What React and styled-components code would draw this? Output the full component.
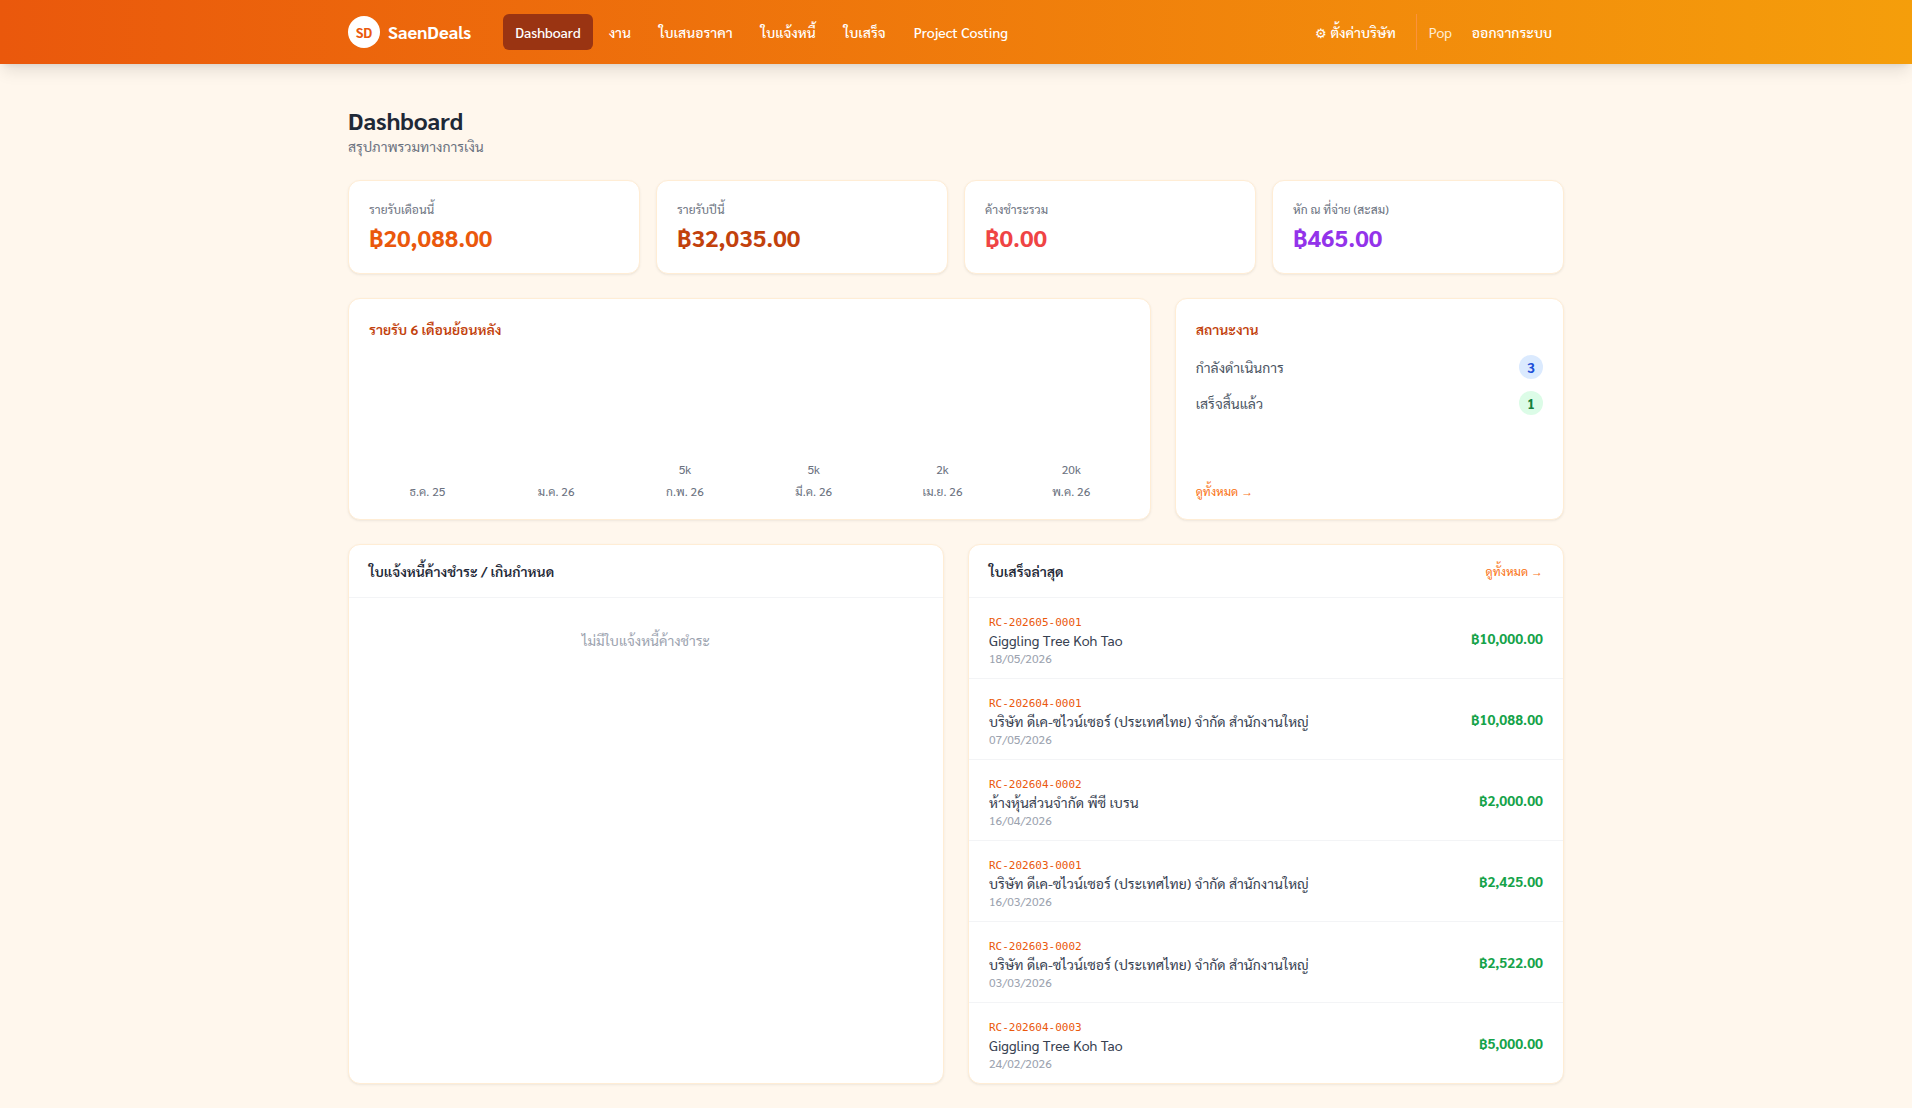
import React from "react";
import styled, { createGlobalStyle } from "styled-components";

const Global = createGlobalStyle`
  *, *::before, *::after { box-sizing: border-box; }
  body { margin: 0; background: #fff7ed; color: #1f2937; font-family: "Sarabun", "Open Sans", "Noto Sans Thai", "Noto Sans", sans-serif; font-size: 16px; line-height: 24px; }
  h1, h2, p { margin: 0; }
`;
const Bar = styled.header`
  height: 64px; background: linear-gradient(90deg, #ea580c, #f59e0b);
  box-shadow: 0 10px 15px -3px rgba(0,0,0,.1), 0 4px 6px -4px rgba(0,0,0,.1);
`;
const BarInner = styled.div`
  width: 1216px; height: 64px; margin: 0 auto; display: flex; align-items: center; justify-content: space-between; color: #fff;
`;
const Group = styled.div`display: flex; align-items: center; gap: ${(p) => p.$gap}px;`;
const Logo = styled.div`
  width: 32px; height: 32px; border-radius: 50%; background: #fff; color: #ea580c; font-weight: 700; font-size: 14px; display: flex; align-items: center; justify-content: center;
`;
const Brand = styled.div`font-size: 18px; font-weight: 700;`;
const NavLink = styled.a`
  padding: 8px 12px; border-radius: 6px; font-size: 14px; line-height: 20px; font-weight: 500; white-space: nowrap;
  background: ${(p) => (p.$active ? "#9a3412" : "transparent")};
`;
const Gear = styled.span`font-size: 13px; line-height: 1;`;
const User = styled.div`
  border-left: 1px solid #fb923c; height: 36px; padding-left: 12px; font-size: 14px; display: flex; align-items: center; color: #ffedd5;
`;
const Main = styled.main`width: 1216px; margin: 0 auto; padding: 40px 0 24px; display: grid; gap: 24px;`;
const Title = styled.h1`font-size: 24px; line-height: 32px; font-weight: 700;`;
const Sub = styled.p`font-size: 14px; line-height: 20px; color: #6b7280;`;
const Grid = styled.div`display: grid; grid-template-columns: ${(p) => p.$cols}; gap: ${(p) => p.$gap}px;`;
const Card = styled.section`
  background: #fff; border: 1px solid #ffedd5; border-radius: 12px; box-shadow: 0 1px 3px rgba(0,0,0,.06), 0 1px 2px -1px rgba(0,0,0,.06);
  padding: ${(p) => (p.$flush ? 0 : "20px")}; display: flex; flex-direction: column; min-width: 0; height: ${(p) => p.$h}px; overflow: hidden;
  grid-column: span ${(p) => p.$span || 1};
`;
const Label = styled.p`font-size: 12px; line-height: 16px; color: #6b7280; margin-bottom: 4px;`;
const Value = styled.p`font-size: 24px; line-height: 32px; font-weight: 700; color: ${(p) => p.$c};`;
const CardTitle = styled.h2`font-size: 14px; line-height: 20px; font-weight: 600; color: ${(p) => p.$c || "#1f2937"};`;
const Chart = styled.div`flex: 1; margin-top: 16px; display: grid; grid-template-columns: repeat(6, 1fr); gap: 12px; align-items: end;`;
const Col = styled.div`display: flex; flex-direction: column; align-items: center; gap: 6px; font-size: 12px; line-height: 16px; color: #6b7280;`;
const Status = styled.div`display: flex; justify-content: space-between; align-items: center; height: 24px; margin-top: ${(p) => p.$mt}px; font-size: 14px; color: #4b5563;`;
const Badge = styled.div`
  width: 24px; height: 24px; border-radius: 12px; text-align: center; font-weight: 700; background: ${(p) => p.$bg}; color: ${(p) => p.$c};
`;
const More = styled.a`font-size: 12px; line-height: 16px; color: #f97316; margin-top: ${(p) => (p.$push ? "auto" : 0)};`;
const Arrow = styled.span`font-family: "Liberation Serif", serif; font-size: 12px; line-height: 1;`;
const Head = styled.div`height: 53px; flex: none; padding: 0 20px; display: flex; align-items: center; justify-content: space-between; border-bottom: 1px solid #f3f4f6;`;
const Empty = styled.p`font-size: 14px; line-height: 20px; color: #9ca3af; text-align: center; padding-top: 32px;`;
const Row = styled.div`
  height: 81px; padding: 12px 20px; display: flex; align-items: center; justify-content: space-between; border-bottom: 1px solid #f3f4f6;
  &:last-child { border-bottom: 0; height: 80px; }
`;
const Code = styled.div`font-family: Consolas, "DejaVu Sans Mono", monospace; font-size: 11px; line-height: 14px; padding-top: 6px; color: #ea580c;`;
const Name = styled.div`font-size: 14px; line-height: 20px; color: #374151;`;
const When = styled.div`font-size: 12px; line-height: 16px; color: #9ca3af;`;
const Amount = styled.div`font-size: 14px; line-height: 20px; font-weight: 700; color: #16a34a;`;

const nav = ["Dashboard", "งาน", "ใบเสนอราคา", "ใบแจ้งหนี้", "ใบเสร็จ", "Project Costing"];
const stats = [
  ["รายรับเดือนนี้", "฿20,088.00", "#ea580c"],
  ["รายรับปีนี้", "฿32,035.00", "#c2410c"],
  ["ค้างชำระรวม", "฿0.00", "#ef4444"],
  ["หัก ณ ที่จ่าย (สะสม)", "฿465.00", "#9333ea"],
];
const months = [["ธ.ค. 25"], ["ม.ค. 26"], ["ก.พ. 26", "5k"], ["มี.ค. 26", "5k"], ["เม.ย. 26", "2k"], ["พ.ค. 26", "20k"]];
const dk = "บริษัท ดีเค-ซไวน์เซอร์ (ประเทศไทย) จำกัด สำนักงานใหญ่";
const receipts = [
  ["RC-202605-0001", "Giggling Tree Koh Tao", "18/05/2026", "฿10,000.00"],
  ["RC-202604-0001", dk, "07/05/2026", "฿10,088.00"],
  ["RC-202604-0002", "ห้างหุ้นส่วนจำกัด พีซี เบรน", "16/04/2026", "฿2,000.00"],
  ["RC-202603-0001", dk, "16/03/2026", "฿2,425.00"],
  ["RC-202603-0002", dk, "03/03/2026", "฿2,522.00"],
  ["RC-202604-0003", "Giggling Tree Koh Tao", "24/02/2026", "฿5,000.00"],
];

export default function App() {
  return (
    <>
      <Global />
      <Bar>
        <BarInner>
          <Group $gap={32}>
            <Group $gap={8}><Logo>SD</Logo><Brand>SaenDeals</Brand></Group>
            <Group $gap={4}>
              {nav.map((t, i) => <NavLink key={t} $active={i === 0}>{t}</NavLink>)}
            </Group>
          </Group>
          <Group $gap={8}>
            <NavLink><Gear>⚙</Gear> ตั้งค่าบริษัท</NavLink>
            <User>Pop</User>
            <NavLink>ออกจากระบบ</NavLink>
          </Group>
        </BarInner>
      </Bar>
      <Main>
        <div><Title>Dashboard</Title><Sub>สรุปภาพรวมทางการเงิน</Sub></div>
        <Grid $cols="repeat(4, 1fr)" $gap={16}>
          {stats.map(([l, v, c]) => <Card key={l} $h={94}><Label>{l}</Label><Value $c={c}>{v}</Value></Card>)}
        </Grid>
        <Grid $cols="repeat(3, 1fr)" $gap={24}>
          <Card $h={222} $span={2}>
            <CardTitle $c="#c2410c">รายรับ 6 เดือนย้อนหลัง</CardTitle>
            <Chart>{months.map(([m, v]) => <Col key={m}>{v && <span>{v}</span>}<span>{m}</span></Col>)}</Chart>
          </Card>
          <Card $h={222}>
            <CardTitle $c="#c2410c">สถานะงาน</CardTitle>
            <Status $mt={16}>กำลังดำเนินการ<Badge $bg="#dbeafe" $c="#1d4ed8">3</Badge></Status>
            <Status $mt={12}>เสร็จสิ้นแล้ว<Badge $bg="#dcfce7" $c="#15803d">1</Badge></Status>
            <More $push>ดูทั้งหมด <Arrow>→</Arrow></More>
          </Card>
        </Grid>
        <Grid $cols="1fr 1fr" $gap={24}>
          <Card $flush $h={540}>
            <Head><CardTitle>ใบแจ้งหนี้ค้างชำระ / เกินกำหนด</CardTitle></Head>
            <Empty>ไม่มีใบแจ้งหนี้ค้างชำระ</Empty>
          </Card>
          <Card $flush $h={540}>
            <Head><CardTitle>ใบเสร็จล่าสุด</CardTitle><More>ดูทั้งหมด <Arrow>→</Arrow></More></Head>
            {receipts.map(([c, n, d, a]) => (
              <Row key={c}><div><Code>{c}</Code><Name>{n}</Name><When>{d}</When></div><Amount>{a}</Amount></Row>
            ))}
          </Card>
        </Grid>
      </Main>
    </>
  );
}
